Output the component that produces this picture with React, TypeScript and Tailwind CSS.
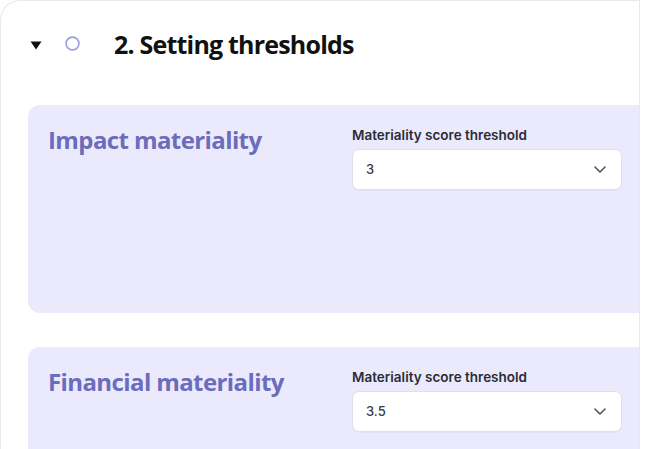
import React from 'react'

const ThresholdSelect = ({ value }: { value: string }) => (
  <div className="flex flex-col">
    <label className="text-[13.5px] font-semibold leading-[16px] text-[#2b2b38] [font-family:Inter,sans-serif]">
      Materiality score threshold
    </label>
    <button className="mt-[6px] flex h-[41px] w-[270px] items-center justify-between rounded-[7px] border border-[#dfdfe8] bg-white pl-[13px] pr-[15px] shadow-[0_1px_1px_rgba(0,0,0,0.03)]">
      <span className="text-[13px] font-medium text-[#3a3a48] [font-family:Inter,sans-serif]">
        {value}
      </span>
      <svg width="12" height="7" viewBox="0 0 12 7" fill="none">
        <path d="M1 1l5 5 5-5" stroke="#4b4b5c" strokeWidth="1.5" strokeLinecap="round" strokeLinejoin="round" />
      </svg>
    </button>
  </div>
)

const Panel = ({ title, value, tall }: { title: string; value: string; tall?: boolean }) => (
  <div
    className={`flex rounded-l-[12px] bg-[#eaeafc] pl-[20px] pt-[18px] ${tall ? 'h-[208px]' : 'h-[130px]'}`}
  >
    <h2 className="w-[304px] text-[24px] font-bold leading-[34px] tracking-[-0.6px] text-[#6c6cbc] [font-family:'Open_Sans',sans-serif]">
      {title}
    </h2>
    <div className="pt-[4px]">
      <ThresholdSelect value={value} />
    </div>
  </div>
)

export default function App() {
  return (
    <div className="h-[449px] w-[649px] overflow-hidden bg-white">
      <div className="h-[470px] w-[640px] overflow-hidden rounded-tl-[20px] border-l border-r border-t border-[#e8e8ee] bg-white">
        <div className="flex h-[85px] items-center pl-[29px]">
          <svg width="12" height="9" viewBox="0 0 12 9" className="mt-[3px]">
            <path d="M0.5 0.5h11L6 8.5z" fill="#111" />
          </svg>
          <svg width="15" height="15" viewBox="0 0 15 15" className="ml-[23px]">
            <circle cx="7.5" cy="7.5" r="6.4" fill="none" stroke="#9d9de0" strokeWidth="1.7" />
          </svg>
          <h1 className="ml-[34px] text-[25px] font-bold leading-[36px] tracking-[-0.8px] text-[#111] [font-family:'Open_Sans',sans-serif]">
            2. Setting thresholds
          </h1>
        </div>
        <div className="flex flex-col gap-[34px] pl-[27px] pt-[19px]">
          <Panel title="Impact materiality" value="3" tall />
          <Panel title="Financial materiality" value="3.5" />
        </div>
      </div>
    </div>
  )
}
